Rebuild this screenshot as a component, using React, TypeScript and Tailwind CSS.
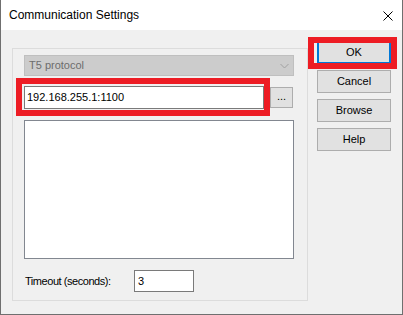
import React from "react";

const font = { fontFamily: '"Liberation Sans", Arial, sans-serif' };

const Btn = ({ label, primary = false }: { label: string; primary?: boolean }) => (
  <div
    className={
      "h-[23px] w-[74px] flex items-center justify-center text-[11px] text-black bg-[#e1e1e1] " +
      (primary ? "border-2 border-[#0078d7]" : "border border-[#adadad]")
    }
  >
    {label}
  </div>
);

export default function App() {
  return (
    <div
      className="relative w-[403px] h-[315px] flex flex-col border-x border-b border-[#6f6f6f] bg-white select-none"
      style={font}
    >
      {/* title bar */}
      <div className="h-[30px] bg-white flex items-center justify-between pl-[8px] pr-[9px]">
        <span className="text-[12px] text-black leading-none pb-[1px]">Communication Settings</span>
        <svg width="10" height="10" viewBox="0 0 10 10" className="mt-[2px]">
          <path d="M0.5 0.5 L9.5 9.5 M9.5 0.5 L0.5 9.5" stroke="#000" strokeWidth="1" />
        </svg>
      </div>

      {/* body */}
      <div className="flex-1 bg-[#f0f0f0] flex items-start pl-[11px] pt-[11px]">
        <div className="mt-[7px] w-[296px] h-[253px] border border-[#dcdcdc] px-[11px] pt-[6px] flex flex-col">
          <div className="h-[21px] w-[270px] bg-[#cccccc] border border-[#bfbfbf] flex items-center justify-between pl-[4px] pr-[4px]">
            <span className="text-[11px] text-[#6d6d6d]">T5 protocol</span>
            <svg width="9" height="6" viewBox="0 0 9 6">
              <path d="M0.5 1 L4.5 5 L8.5 1" fill="none" stroke="#a0a0a0" strokeWidth="1" />
            </svg>
          </div>

          <div className="mt-[10px] flex items-start gap-[6px]">
            <div className="w-[240px] h-[23px] border border-[#7a7a7a] bg-white flex items-center pl-[2px] text-[11px] text-black">
              192.168.255.1:1100
            </div>
            <div className="mt-[1px] w-[23px] h-[21px] bg-[#e1e1e1] border border-[#adadad] flex items-center justify-center text-[11px] text-black pb-[2px]">
              ...
            </div>
          </div>

          <div className="mt-[11px] w-[270px] h-[139px] border border-[#828790] bg-white" />

          <div className="mt-[11px] flex items-center">
            <span className="w-[110px] pl-[1px] text-[11px] text-black tracking-[-0.45px]">Timeout (seconds):</span>
            <div className="w-[60px] h-[22px] border border-[#7a7a7a] bg-white flex items-center pl-[3px] text-[11px] text-black">
              3
            </div>
          </div>
        </div>

        <div className="ml-[9px] flex flex-col gap-[6px]">
          <Btn label="OK" primary />
          <Btn label="Cancel" />
          <Btn label="Browse" />
          <Btn label="Help" />
        </div>
      </div>

      {/* red annotation boxes */}
      <div className="absolute left-[15px] top-[78px] w-[254px] h-[38px] border-[6px] border-[#ed1c24]" />
      <div className="absolute left-[307px] top-[37px] w-[89px] h-[32px] border-[6px] border-[#ed1c24]" />
    </div>
  );
}
